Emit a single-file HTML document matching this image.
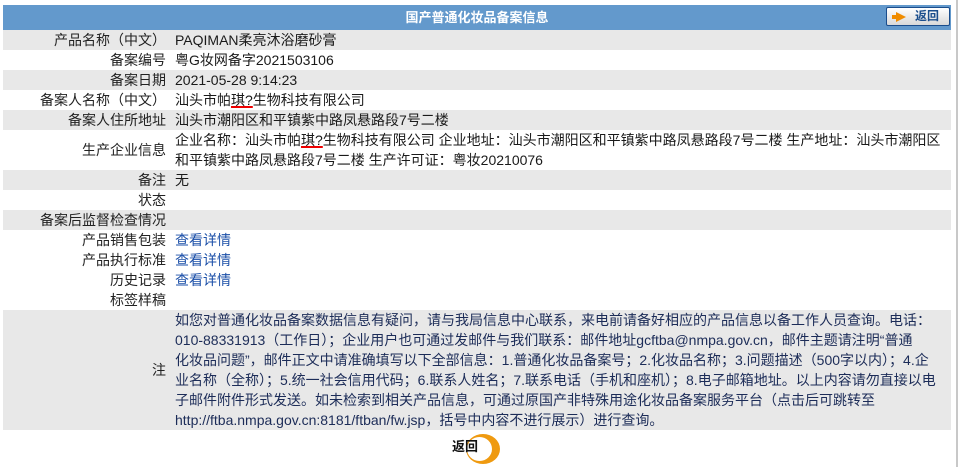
<!DOCTYPE html>
<html><head><meta charset="utf-8"><style>
*{margin:0;padding:0;box-sizing:border-box}
body{width:961px;height:467px;background:#fff;font-family:"Liberation Sans","Noto Sans CJK SC",sans-serif;font-size:14px;color:#1a1a1a;position:relative;overflow:hidden}
.sb{position:absolute;left:956px;top:0;width:2px;height:467px;background:#c8c8c8}
table{position:absolute;left:3px;top:5px;width:948px;border-collapse:collapse}
td{height:20px;line-height:20px;padding:0;vertical-align:middle}
td.l{width:163px;text-align:right;padding-right:0;color:#222}
td.v{padding-left:9px;padding-right:8px}
tr.g td{background:#e8e8e8}
tr.h td{background:#6399cc;height:25px;color:#fff;font-weight:bold;font-size:13px;text-align:center;position:relative}
a{color:#1b4fa8;text-decoration:none}
.n{color:#1c2c58;white-space:nowrap}
.u{text-decoration:underline;text-decoration-color:#e00;text-decoration-thickness:2px}
.btn{position:absolute;right:1px;top:2px;width:64px;height:19px;border:1px solid #1a4d8c;border-radius:2px;background:linear-gradient(#fff,#d8d8d8);font-size:12px;color:#1a4d8c;line-height:17px;text-align:right;padding-right:10px}
.ar{position:absolute;left:9px;top:4px;width:0;height:0;border-left:10px solid #f08c00;border-top:5px solid transparent;border-bottom:5px solid transparent}
.ar:before{content:"";position:absolute;left:-14px;top:-2px;width:5px;height:4px;background:#f08c00}
.back{position:absolute;left:452px;top:436px;font-weight:bold;font-size:13px;color:#111}
.moon{position:absolute;left:466px;top:434px;width:34px;height:30px;border-radius:50%;background:#ef9a10}
.moon:after{content:"";position:absolute;left:1px;top:3px;width:25px;height:24px;border-radius:50%;background:#fff}
</style></head><body>
<div class="sb"></div>
<table>
<tr class="h"><td colspan="2">国产普通化妆品备案信息<div class="btn"><span class="ar"></span>返回</div></td></tr>
<tr class="g"><td class="l">产品名称（中文）</td><td class="v">PAQIMAN柔亮沐浴磨砂膏</td></tr>
<tr><td class="l">备案编号</td><td class="v">粤G妆网备字2021503106</td></tr>
<tr class="g"><td class="l">备案日期</td><td class="v">2021-05-28 9:14:23</td></tr>
<tr><td class="l">备案人名称（中文）</td><td class="v">汕头市帕<span class="u">琪?</span>生物科技有限公司</td></tr>
<tr class="g"><td class="l">备案人住所地址</td><td class="v">汕头市潮阳区和平镇紫中路凤悬路段7号二楼</td></tr>
<tr><td class="l">生产企业信息</td><td class="v" style="white-space:nowrap">企业名称：汕头市帕<span class="u">琪?</span>生物科技有限公司 企业地址：汕头市潮阳区和平镇紫中路凤悬路段7号二楼 生产地址：汕头市潮阳区<br>和平镇紫中路凤悬路段7号二楼 生产许可证：粤妆20210076</td></tr>
<tr class="g"><td class="l">备注</td><td class="v">无</td></tr>
<tr><td class="l">状态</td><td class="v"></td></tr>
<tr class="g"><td class="l">备案后监督检查情况</td><td class="v"></td></tr>
<tr><td class="l">产品销售包装</td><td class="v"><a>查看详情</a></td></tr>
<tr><td class="l">产品执行标准</td><td class="v"><a>查看详情</a></td></tr>
<tr><td class="l">历史记录</td><td class="v"><a>查看详情</a></td></tr>
<tr><td class="l">标签样稿</td><td class="v"></td></tr>
<tr class="g"><td class="l">注</td><td class="v n">如您对普通化妆品备案数据信息有疑问，请与我局信息中心联系，来电前请备好相应的产品信息以备工作人员查询。电话：<br>010-88331913（工作日）；企业用户也可通过发邮件与我们联系：邮件地址gcftba@nmpa.gov.cn，邮件主题请注明“普通<br>化妆品问题”，邮件正文中请准确填写以下全部信息：1.普通化妆品备案号；2.化妆品名称；3.问题描述（500字以内）；4.企<br>业名称（全称）；5.统一社会信用代码；6.联系人姓名；7.联系电话（手机和座机）；8.电子邮箱地址。以上内容请勿直接以电<br>子邮件附件形式发送。如未检索到相关产品信息，可通过原国产非特殊用途化妆品备案服务平台（点击后可跳转至<br>http://ftba.nmpa.gov.cn:8181/ftban/fw.jsp，括号中内容不进行展示）进行查询。</td></tr>
</table>
<div class="moon"></div>
<div class="back">返回</div>
</body></html>
